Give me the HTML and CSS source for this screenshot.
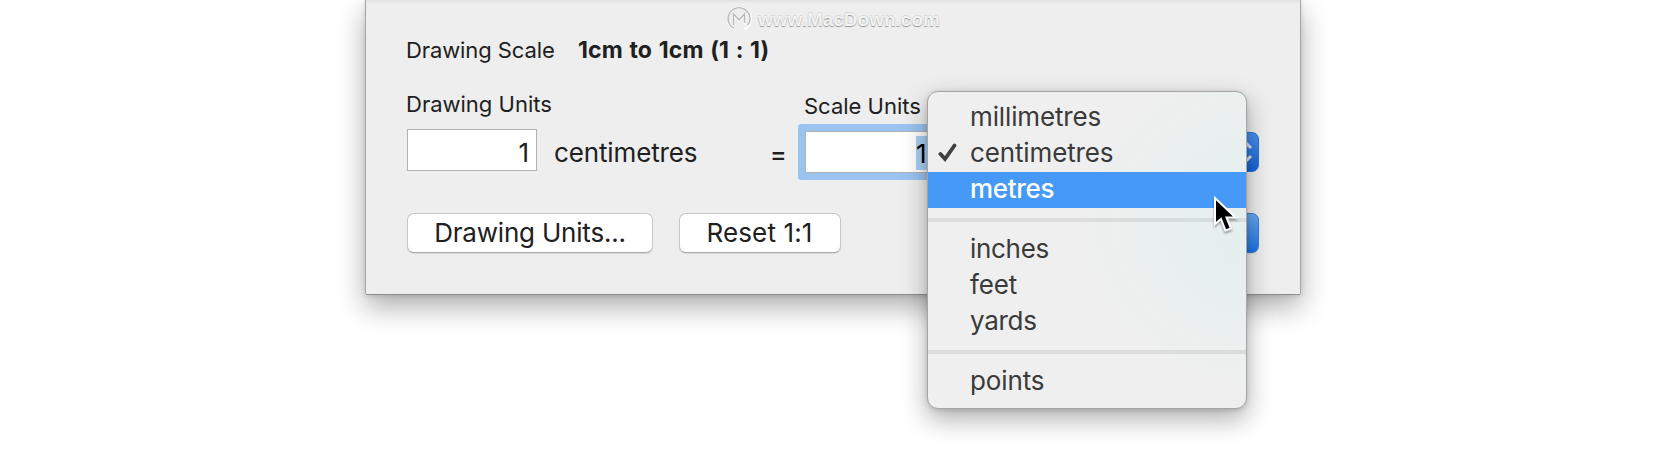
FILE: index.html
```html
<!DOCTYPE html>
<html lang="en">
<head>
<meta charset="utf-8">
<title>Drawing Scale</title>
<link rel="stylesheet" href="styles.css">
</head>
<body>
<main class="panel">
  <div class="watermark">
    <svg class="watermark-logo" viewBox="0 0 28 28">
      <g fill="none" stroke-width="1.6">
        <path class="logo-light" d="M9 24.5A11.7 11.7 0 1 1 19 24.8M8.5 21.5V10L14 16L19.5 10V20"/>
        <path class="logo-dark" d="M9 23.5A11 11 0 1 1 23 20M8.5 20V9L14 15L19.5 9V18"/>
      </g>
    </svg>
    <span class="watermark-text">www.MacDown.com</span>
  </div>
  <div class="summary">
    <span class="label summary-label">Drawing Scale</span>
    <strong class="summary-value">1cm to 1cm (1 : 1)</strong>
  </div>
  <div class="units">
    <section class="drawing">
      <div class="label">Drawing Units</div>
      <div class="field-row">
        <div class="field">1</div>
        <span class="unit-name">centimetres</span>
        <span class="equals">=</span>
      </div>
    </section>
    <section class="scale">
      <div class="label scale-label">Scale Units</div>
      <div class="field-row">
        <div class="field field-focus"><span class="selection">1</span></div>
        <div class="popup"><svg viewBox="0 0 16 24"><path d="M2 8L8 2L14 8M2 16L8 22L14 16"/></svg></div>
      </div>
    </section>
  </div>
  <div class="actions">
    <div class="button button-units">Drawing Units...</div>
    <div class="button button-reset">Reset 1:1</div>
    <div class="button button-ok"></div>
  </div>
</main>
<div class="menu">
  <div class="item millimetres">millimetres</div>
  <div class="item centimetres"><svg class="check" viewBox="0 0 20 20"><path d="M2.5 11L7 16L16.5 2.5"/></svg>centimetres</div>
  <div class="item metres item-active">metres</div>
  <div class="separator"></div>
  <div class="item inches">inches</div>
  <div class="item feet">feet</div>
  <div class="item yards">yards</div>
  <div class="separator"></div>
  <div class="item points">points</div>
</div>
<svg class="cursor" viewBox="0 0 26 40">
  <path d="M2 2V28L8 23L12.5 34.5L18 32.5L13.5 21.5H22.5Z"/>
</svg>
</body>
</html>
```
FILE: styles.css
```css
* { box-sizing: border-box; }
body {
  margin: 0;
  height: 458px;
  overflow: hidden;
  background: #fff;
  color: #202020;
  font-family: Inter, "Liberation Sans", sans-serif;
  font-weight: 400;
}
.panel {
  margin-left: 365px;
  width: 936px;
  height: 295px;
  padding: 6px 40px 0 41px;
  display: flex;
  flex-direction: column;
  background: linear-gradient(#e2e2e2 0, #eee 4px);
  border: 1px solid #a6a6a6;
  border-top: 0;
  border-bottom-color: #8e8e8e;
  border-radius: 0 0 2px 2px;
  box-shadow: 0 12px 28px rgba(0,0,0,.32), 0 1px 5px rgba(0,0,0,.12);
}
.watermark { display: flex; align-items: center; height: 26px; padding-left: 318px; gap: 5px; }
.watermark-logo { width: 28px; height: 28px; }
.logo-light { stroke: #fff; }
.logo-dark { stroke: #b9b9b9; stroke-width: 1.3; }
.watermark-text {
  font: bold 19px/24px "Liberation Sans", sans-serif;
  padding-top: 2px;
  color: #f2f2f2;
  text-shadow: 0 1px 1px #999, 0 -1px 0 #dadada;
}
.label { font-size: 22px; line-height: 26px; letter-spacing: 0; margin-left: -1px; white-space: nowrap; }
.summary { display: flex; height: 36px; padding-top: 5px; font-size: 22px; line-height: 26px; }
.summary-label { width: 172px; letter-spacing: -.1px; }
.summary-value { font-size: 23px; font-weight: 700; letter-spacing: .15px; word-spacing: 1px; line-height: 27px; white-space: nowrap; }
.units { display: flex; margin-top: 23px; height: 90px; }
.drawing { width: 391px; }
.scale { flex: 1; padding: 2px 0 0 7px; }
.field-row { display: flex; padding-top: 12px; }
.field {
  width: 130px;
  height: 42px;
  padding-right: 7px;
  border: 1px solid #b2b2b2;
  background: #fff;
  font-size: 26px;
  line-height: 45px;
  text-align: right;
}
.unit-name { font-size: 26px; line-height: 48px; letter-spacing: -.13px; margin-left: 17px; width: 216px; white-space: nowrap; }
.equals { font-size: 25px; line-height: 51px; font-weight: 500; }
.field-focus { color: #000; box-shadow: 0 0 0 7px #9ac4f0; border-radius: 1px; padding: 4px 0 0 110px; text-align: left; }
.selection { display: block; width: 20px; height: 34px; line-height: 36px; background: #a9d1f5; }
.popup {
  margin: 1px 0 0 284px;
  width: 40px;
  height: 40px;
  border-radius: 7px;
  background: linear-gradient(#4a92ef, #1762d4);
  border: 1px solid #2b70dc;
  padding: 7px 0 0 17px;
}
.popup svg { display: block; width: 16px; height: 24px; fill: none; stroke: #dce6f4; stroke-width: 3; }
.actions { display: flex; margin-top: 32px; height: 40px; }
.button {
  height: 40px;
  border: 1px solid #c9c9c9;
  border-bottom-color: #ababab;
  border-radius: 7px;
  background: #fff;
  font-size: 26px;
  line-height: 37px;
  letter-spacing: -.2px;
  text-align: center;
  white-space: nowrap;
  box-shadow: 0 1px 1px rgba(0,0,0,.1);
}
.button-units { width: 246px; }
.button-reset { width: 162px; margin-left: 26px; padding-right: 1px; letter-spacing: .15px; }
.button-ok { width: 200px; margin-left: auto; margin-right: 1px; background: linear-gradient(#69a9ef, #1d73e6); border-color: #317fe3; }
.menu {
  position: absolute;
  left: 927px;
  top: 91px;
  width: 320px;
  height: 318px;
  padding: 8px 0;
  border: 1px solid #a5a5a5;
  border-radius: 11px;
  background: radial-gradient(ellipse 190px 165px at 108% 42%, #e4efee 0, #e9f0ef 65%, #efefef 100%) #efefef;
  box-shadow: 0 10px 26px rgba(0,0,0,.32), 0 1px 5px rgba(0,0,0,.15);
  color: #3a3a3a;
}
.item { position: relative; height: 36px; padding-left: 42px; font-size: 26px; line-height: 34px; letter-spacing: -.13px; white-space: nowrap; }
.item-active { background: #4799f7; color: #fff; font-weight: 500; letter-spacing: -.3px; }
.inches, .yards { letter-spacing: -.3px; }
.separator { height: 4px; margin: 10px 0; background: rgba(0,0,0,.075); }
.check { position: absolute; left: 10px; top: 7px; width: 20px; height: 20px; fill: none; stroke: #404040; stroke-width: 3.8; stroke-linecap: round; }
.cursor { position: absolute; left: 1213px; top: 196px; width: 26px; height: 40px; filter: drop-shadow(0 2px 1px rgba(0,0,0,.35)); }
.cursor path { fill: #000; stroke: #fff; stroke-width: 2; }
```
